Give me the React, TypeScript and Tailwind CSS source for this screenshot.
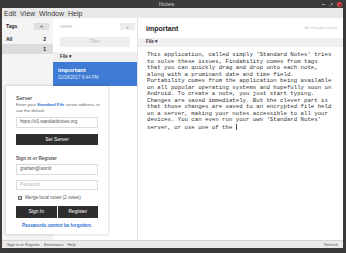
const noteLines = [
  "This application, called simply 'Standard Notes' tries",
  'to solve these issues, Findability comes from tags',
  'that you can quickly drag and drop onto each note,',
  'along with a prominant date and time field.',
  'Portability comes from the application being available',
  'on all popular operating systems and hopefully soon on',
  'Android. To create a note, you just start typing.',
  'Changes are saved immediately. But the clever part is',
  'that those changes are saved to an encrypted file held',
  'on a server, making your notes accessible to all your',
  "devices. You can even run your own 'Standard Notes'",
  'server, or use one of the '
]

export default function App() {
  return (
    <div className="relative flex h-[253px] w-[346px] flex-col overflow-hidden bg-[#3a3a3a] font-['Liberation_Sans',sans-serif]">
      <TitleBar />
      <div className="flex flex-1 flex-col border-b-[5px] border-l-2 border-r-[3px] border-b-[#3a3a3a] border-l-[#433b35] border-r-[#3a3a3a] bg-white">
        <div className="flex h-[10px] items-center gap-[4px] bg-[#e9e9e9] pl-[2px] text-[7px] leading-none text-[#3a3a3a]">
          <span>Edit</span>
          <span>View</span>
          <span>Window</span>
          <span>Help</span>
        </div>
        <div className="flex flex-1">
          <TagsPanel />
          <NotesPanel />
          <Editor />
        </div>
        <div className="flex h-[8px] items-center justify-between border-t border-[#d4d4d4] bg-[#ebebeb] px-[5px] text-[4px] leading-none text-[#555]">
          <div className="flex gap-[4px]">
            <span>Sign in or Register</span>
            <span>Extensions</span>
            <span>Help</span>
          </div>
          <span>Refresh</span>
        </div>
      </div>
      <AccountPanel />
    </div>
  )
}

function TitleBar() {
  return (
    <div className="relative flex h-[8px] items-center justify-center bg-[#3a3a3a]">
      <span className="ml-[-13px] text-[6px] leading-none text-[#c8c8c8]">Notes</span>
      <div className="absolute right-[4px] top-[2px] flex items-center gap-[4px]">
        <span className="h-[1px] w-[3px] bg-[#9a9a9a]" />
        <svg width="4" height="4" viewBox="0 0 4 4">
          <path d="M0.5 3.5 L3.5 0.5 M2 0.5 H3.5 V2" stroke="#9a9a9a" strokeWidth="0.7" fill="none" />
        </svg>
        <span className="flex h-[5px] w-[5px] items-center justify-center rounded-full bg-[#e0454b]">
          <span className="h-[2px] w-[2px] rounded-full bg-[#7a1c20]" />
        </span>
      </div>
    </div>
  )
}

function TagsPanel() {
  return (
    <div className="flex w-[51px] flex-col bg-[#f4f4f4] text-[5px] leading-none text-[#222]">
      <div className="flex h-[16px] items-center justify-between pl-[4px] pr-[4px]">
        <span className="font-bold">Tags</span>
        <span className="flex h-[7px] w-[15px] items-center justify-center bg-[#dedede] text-[6px] text-[#555]">+</span>
      </div>
      <div className="flex h-[10px] items-center justify-between pl-[4px] pr-[7px] font-bold">
        <span>All</span>
        <span>2</span>
      </div>
      <div className="flex h-[10px] items-center justify-end bg-[#dcdcdc] pr-[7px] font-bold">
        <span>1</span>
      </div>
    </div>
  )
}

function NotesPanel() {
  return (
    <div className="flex w-[85px] flex-col border-r border-[#e2e2e2] bg-white">
      <div className="flex h-[34px] flex-col px-[7px] pt-[5px]">
        <div className="flex items-center justify-between">
          <span className="text-[5px] leading-none text-[#b5b5b5]">notes</span>
          <span className="mr-[-5px] flex h-[7px] w-[15px] items-center justify-center bg-[#ececec] text-[6px] leading-none text-[#aaa]">+</span>
        </div>
        <div className="mt-[7px] flex h-[10px] items-center justify-center bg-[#eeeeee] text-[4.5px] leading-none text-[#b8b8b8]">
          Filter
        </div>
      </div>
      <div className="flex h-[10px] items-center bg-[#efefef] px-[7px] text-[4.5px] font-bold leading-none text-[#333]">
        File ▾
      </div>
      <div className="flex h-[24px] flex-col justify-center gap-[3px] bg-[#3f7bd4] px-[5px] text-white">
        <span className="text-[6px] font-bold leading-none">important</span>
        <span className="text-[4.5px] leading-none text-[#dbe6f7]">02/28/2017 6:44 PM</span>
      </div>
    </div>
  )
}

function Editor() {
  return (
    <div className="flex flex-1 flex-col">
      <div className="flex h-[20px] items-center justify-between pl-[8px] pr-[6px]">
        <span className="text-[7px] font-bold leading-none text-[#222]">important</span>
        <span className="text-[4px] leading-none text-[#c4c4c4]">All changes saved</span>
      </div>
      <div className="flex h-[9px] items-center bg-[#efefef] pl-[8px] text-[4.5px] font-bold leading-none text-[#333]">
        File ▾
      </div>
      <div className="pl-[9px] pt-[5px] font-['Liberation_Mono',monospace] text-[5.7px] leading-[6.5px] whitespace-pre text-[#333]">
        {noteLines.map((line, i) => (
          <div key={i} className="h-[6.5px] overflow-visible">
            {line}
            {i === noteLines.length - 1 && (
              <span className="inline-block h-[6px] w-px bg-[#444] align-middle" />
            )}
          </div>
        ))}
      </div>
    </div>
  )
}

function AccountPanel() {
  return (
    <div className="absolute left-[6px] top-[86px] flex h-[148px] w-[102px] flex-col bg-white px-[10px] pt-[9px] text-[#333] shadow-[0_0_3px_rgba(0,0,0,0.25)]">
      <span className="text-[5.5px] leading-[6px] text-[#222]">Server</span>
      <div className="mt-[1px] flex flex-col whitespace-nowrap text-[4.3px] leading-[6px] text-[#666]">
        <span>
          Enter your <b className="text-[#2b6fd1]">Standard File</b> server address, or
        </span>
        <span>use the default.</span>
      </div>
      <div className="mt-[3px] flex h-[11px] items-center border border-[#dcdcdc] px-[3px] text-[4.6px] leading-none text-[#555]">
        https://n3.standardnotes.org
      </div>
      <div className="mt-[6px] flex h-[11px] items-center justify-center bg-[#2e2e2e] text-[5px] leading-none text-white">
        Set Server
      </div>
      <span className="mt-[11px] text-[4.6px] leading-[6px] font-bold text-[#555]">Sign in or Register</span>
      <div className="mt-[2px] flex h-[11px] items-center border border-[#dcdcdc] px-[3px] text-[4.6px] leading-none text-[#555]">
        graham@world
      </div>
      <div className="mt-[5px] flex h-[10px] items-center border border-[#dcdcdc] px-[3px] text-[4.6px] leading-none text-[#bbb]">
        Password
      </div>
      <div className="mt-[6px] flex items-center gap-[3px] pl-[2px] text-[4.6px] leading-none text-[#555]">
        <span className="flex h-[4px] w-[4px] items-center justify-center border border-[#777] text-[4px] leading-none text-[#222]">✓</span>
        <span>Merge local notes (2 notes)</span>
      </div>
      <div className="mt-[5px] flex gap-[1px]">
        <div className="flex h-[12px] flex-1 items-center justify-center bg-[#2e2e2e] text-[5px] leading-none text-white">Sign In</div>
        <div className="flex h-[12px] flex-1 items-center justify-center bg-[#2e2e2e] text-[5px] leading-none text-white">Register</div>
      </div>
      <span className="mt-[5px] text-center text-[4.6px] font-bold leading-[6px] text-[#2b6fd1]">Passwords cannot be forgotten.</span>
    </div>
  )
}
